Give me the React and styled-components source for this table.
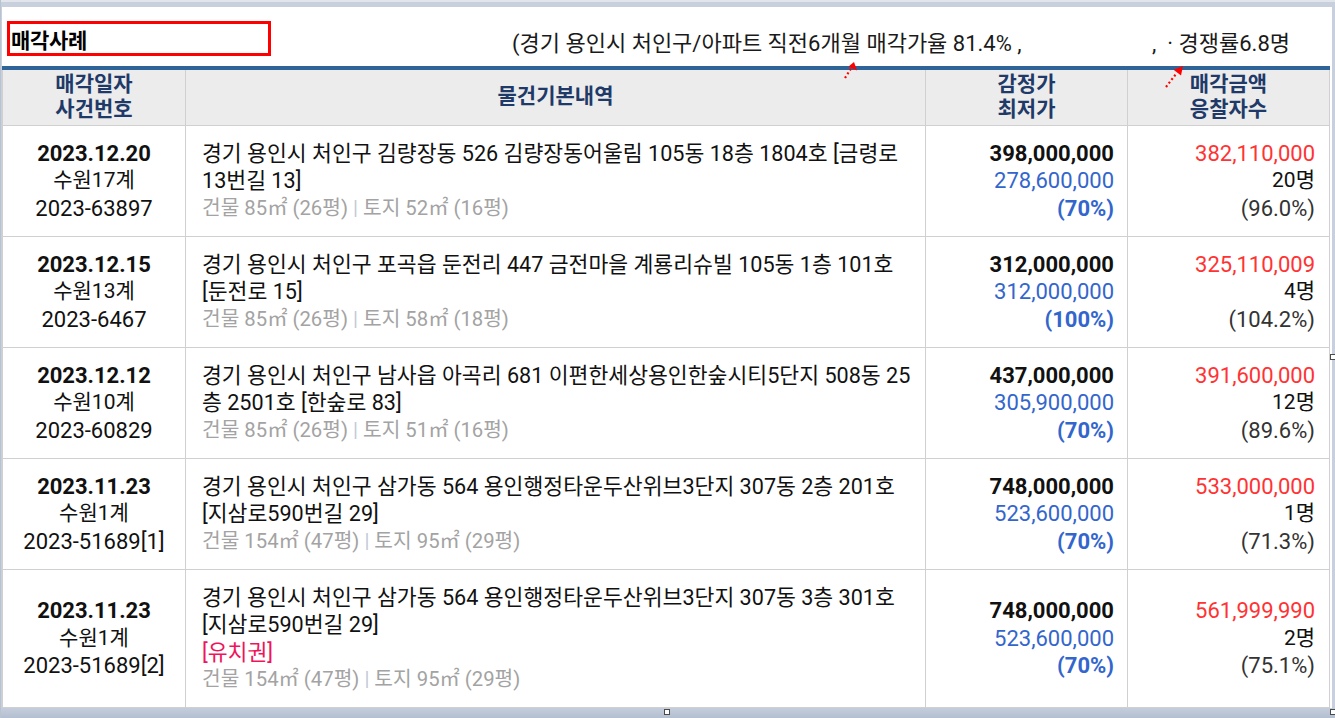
import React from 'react';
import styled, { createGlobalStyle } from 'styled-components';

const GlobalStyle = createGlobalStyle`
  html, body { margin: 0; padding: 0; background: #c9d1df; }
  body { font-family: Roboto, "Noto Sans CJK KR", sans-serif; }
  * { box-sizing: border-box; }
`;

const Frame = styled.div`
  position: relative;
  width: 1335px;
  height: 718px;
  overflow: hidden;
  padding: 7px 4px 10px 1px;
  background: linear-gradient(to bottom, #e2e6ec 0px, #e2e6ec 2px, #c8d0de 2px, #c8d0de 706px, #b3bed0 718px);
  border-left: 1px solid #b9c2d0;
`;

const Page = styled.div`
  width: 1330px;
  height: 701px;
  background: #fff;
  display: flex;
  flex-direction: column;
`;

const TitleBar = styled.div`
  height: 59px;
  display: flex;
  align-items: flex-end;
  padding: 0 42px 10px 5px;
`;

const TitleBox = styled.div`
  width: 264px;
  height: 35px;
  border: 3px solid #ff0000;
  display: flex;
  align-items: flex-end;
  font-size: 21px;
  font-weight: 700;
  line-height: 24px;
  color: #000;
  letter-spacing: -0.3px;
  padding-left: 1px;
`;

const Summary = styled.span`
  font-size: 22px;
  line-height: 25px;
  color: #1a1a1a;
  white-space: nowrap;
  margin-left: ${p => p.$gap};
`;

const Rule = styled.div`
  height: 4px;
  margin-right: 2px;
  background: #2e6497;
`;

const Grid = styled.div`
  display: grid;
  grid-template-columns: 184px 740px 202px 202px;
  grid-template-rows: 56px 111px 111px 111px 111px 138px;
`;

const HeadCell = styled.div`
  background: #ececec;
  border-right: 1px solid #d0d0d0;
  border-bottom: 1px solid #d0d0d0;
  border-left: ${p => (p.$first ? '1px solid #d0d0d0' : 'none')};
  color: #1f3a68;
  font-size: 21px;
  font-weight: 700;
  line-height: 25px;
  padding-bottom: 2px;
  display: flex;
  flex-direction: column;
  align-items: center;
  justify-content: center;
  text-align: center;
`;

const Cell = styled.div`
  border-right: 1px solid #d0d0d0;
  border-bottom: 1px solid #d0d0d0;
  border-left: ${p => (p.$first ? '1px solid #d0d0d0' : 'none')};
  display: flex;
  flex-direction: column;
  justify-content: center;
  align-items: ${p => p.$align};
  padding: ${p => p.$pad};
  color: #111;
  font-size: ${p => p.$size || '21.6px'};
  line-height: 27.5px;
  white-space: nowrap;
`;

const Line = styled.span`
  display: block;
  color: ${p => p.$color || 'inherit'};
  font-weight: ${p => (p.$bold ? 700 : 400)};
  font-size: ${p => p.$size || 'inherit'};
`;

const Sep = styled.span`
  color: #c2cad6;
`;

const Handle = styled.div`
  position: absolute;
  left: ${p => p.$x}px;
  top: ${p => p.$y}px;
  width: 6px;
  height: 6px;
  background: #fff;
  border: 1px solid #4a4a4a;
`;

const ArrowWrap = styled.svg`
  position: absolute;
  left: ${p => p.$x}px;
  top: ${p => p.$y}px;
  overflow: visible;
`;

const rows = [
  {
    date: '2023.12.20', court: '수원17계', no: '2023-63897',
    addr: ['경기 용인시 처인구 김량장동 526 김량장동어울림 105동 18층 1804호 [금령로', '13번길 13]'],
    bld: '85', bldP: '26', land: '52', landP: '16',
    appr: '398,000,000', min: '278,600,000', pct: '(70%)',
    sale: '382,110,000', bid: '20명', ratio: '(96.0%)',
  },
  {
    date: '2023.12.15', court: '수원13계', no: '2023-6467',
    addr: ['경기 용인시 처인구 포곡읍 둔전리 447 금전마을 계룡리슈빌 105동 1층 101호', '[둔전로 15]'],
    bld: '85', bldP: '26', land: '58', landP: '18',
    appr: '312,000,000', min: '312,000,000', pct: '(100%)',
    sale: '325,110,009', bid: '4명', ratio: '(104.2%)',
  },
  {
    date: '2023.12.12', court: '수원10계', no: '2023-60829',
    addr: ['경기 용인시 처인구 남사읍 아곡리 681 이편한세상용인한숲시티5단지 508동 25', '층 2501호 [한숲로 83]'],
    bld: '85', bldP: '26', land: '51', landP: '16',
    appr: '437,000,000', min: '305,900,000', pct: '(70%)',
    sale: '391,600,000', bid: '12명', ratio: '(89.6%)',
  },
  {
    date: '2023.11.23', court: '수원1계', no: '2023-51689[1]',
    addr: ['경기 용인시 처인구 삼가동 564 용인행정타운두산위브3단지 307동 2층 201호', '[지삼로590번길 29]'],
    bld: '154', bldP: '47', land: '95', landP: '29',
    appr: '748,000,000', min: '523,600,000', pct: '(70%)',
    sale: '533,000,000', bid: '1명', ratio: '(71.3%)',
  },
  {
    date: '2023.11.23', court: '수원1계', no: '2023-51689[2]',
    addr: ['경기 용인시 처인구 삼가동 564 용인행정타운두산위브3단지 307동 3층 301호', '[지삼로590번길 29]'],
    note: '[유치권]',
    bld: '154', bldP: '47', land: '95', landP: '29',
    appr: '748,000,000', min: '523,600,000', pct: '(70%)',
    sale: '561,999,990', bid: '2명', ratio: '(75.1%)',
  },
];

function Arrow({ x, y, tail, tip, head }) {
  return (
    <ArrowWrap $x={x} $y={y} width="30" height="32" viewBox="0 0 30 32">
      <line x1={tail[0]} y1={tail[1]} x2={tip[0]} y2={tip[1]} stroke="#ff0000" strokeWidth="2.2" strokeDasharray="2 2.5" />
      <polygon points={head} fill="#ff0000" />
    </ArrowWrap>
  );
}

export default function App() {
  return (
    <>
      <GlobalStyle />
      <Frame>
        <Page>
          <TitleBar>
            <TitleBox>매각사례</TitleBox>
            <Summary $gap="241px">(경기 용인시 처인구/아파트 직전6개월 매각가율 81.4% ,</Summary>
            <Summary $gap="auto">,&nbsp; · 경쟁률6.8명</Summary>
          </TitleBar>
          <Rule />
          <Grid>
            <HeadCell $first>
              <span>매각일자</span>
              <span>사건번호</span>
            </HeadCell>
            <HeadCell>물건기본내역</HeadCell>
            <HeadCell>
              <span>감정가</span>
              <span>최저가</span>
            </HeadCell>
            <HeadCell>
              <span>매각금액</span>
              <span>응찰자수</span>
            </HeadCell>
            {rows.map((r, i) => (
              <React.Fragment key={i}>
                <Cell $first $align="center" $pad="0 6px" $size="22px">
                  <Line $bold>{r.date}</Line>
                  <Line $size="21px">{r.court}</Line>
                  <Line>{r.no}</Line>
                </Cell>
                <Cell $align="flex-start" $pad="0 8px 0 16px">
                  {r.addr.map((l, k) => (
                    <Line key={k}>{l}</Line>
                  ))}
                  {r.note && <Line $color="#f0145a">{r.note}</Line>}
                  <Line $color="#a3a3a3" $size="20.3px">
                    건물 {r.bld}㎡ ({r.bldP}평) <Sep>|</Sep> 토지 {r.land}㎡ ({r.landP}평)
                  </Line>
                </Cell>
                <Cell $align="flex-end" $pad="0 13px 0 10px" $size="22px">
                  <Line $bold>{r.appr}</Line>
                  <Line $color="#3366cc">{r.min}</Line>
                  <Line $color="#3366cc" $bold>{r.pct}</Line>
                </Cell>
                <Cell $align="flex-end" $pad="0 14px 0 10px" $size="22px">
                  <Line $color="#ff3333">{r.sale}</Line>
                  <Line $size="21px">{r.bid}</Line>
                  <Line $color="#333">{r.ratio}</Line>
                </Cell>
              </React.Fragment>
            ))}
          </Grid>
        </Page>
        <Arrow x={837} y={58} tail={[7, 20]} tip={[14, 9]} head="16,4 19,12.5 10.5,8.5" />
        <Arrow x={1159} y={60} tail={[6, 27]} tip={[16, 14]} head="23,6 21,15.5 13.6,9.8" />
        <Handle $x={663} $y={709} />
        <Handle $x={1329} $y={709} />
        <Handle $x={1329} $y={354} />
      </Frame>
    </>
  );
}
